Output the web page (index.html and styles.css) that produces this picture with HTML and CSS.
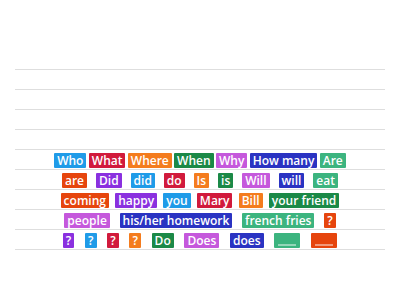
FILE: index.html
```html
<!DOCTYPE html>
<html>
<head>
<meta charset="utf-8">
<link rel="stylesheet" href="styles.css">
</head>
<body>
<div class="sheet">
  <div class="line"></div>
  <div class="line"></div>
  <div class="line"></div>
  <div class="line"></div>
  <div class="line">
    <div class="tiles wide">
      <span class="tile c-blue">Who</span>
      <span class="tile c-crimson">What</span>
      <span class="tile c-orange">Where</span>
      <span class="tile c-green">When</span>
      <span class="tile c-orchid">Why</span>
      <span class="tile c-navy">How many</span>
      <span class="tile c-teal">Are</span>
    </div>
  </div>
  <div class="line">
    <div class="tiles">
      <span class="tile c-red">are</span>
      <span class="tile c-violet">Did</span>
      <span class="tile c-blue">did</span>
      <span class="tile c-crimson">do</span>
      <span class="tile c-orange">Is</span>
      <span class="tile c-green">is</span>
      <span class="tile c-orchid">Will</span>
      <span class="tile c-navy">will</span>
      <span class="tile c-teal">eat</span>
    </div>
  </div>
  <div class="line">
    <div class="tiles">
      <span class="tile c-red">coming</span>
      <span class="tile c-violet">happy</span>
      <span class="tile c-blue">you</span>
      <span class="tile c-crimson">Mary</span>
      <span class="tile c-orange">Bill</span>
      <span class="tile c-green">your friend</span>
    </div>
  </div>
  <div class="line">
    <div class="tiles narrow">
      <span class="tile c-orchid">people</span>
      <span class="tile c-navy">his/her homework</span>
      <span class="tile c-teal">french fries</span>
      <span class="tile c-red">?</span>
    </div>
  </div>
  <div class="line last">
    <div class="tiles">
      <span class="tile c-violet">?</span>
      <span class="tile c-blue">?</span>
      <span class="tile c-crimson">?</span>
      <span class="tile c-orange">?</span>
      <span class="tile c-green">Do</span>
      <span class="tile c-orchid">Does</span>
      <span class="tile c-navy">does</span>
      <span class="tile blank c-teal"><span class="gap"></span></span>
      <span class="tile blank c-red"><span class="gap"></span></span>
    </div>
  </div>
</div>
</body>
</html>
```
FILE: styles.css
```css
html, body {
  margin: 0;
  padding: 0;
  background: #ffffff;
}
body {
  font-family: "Open Sans", "Liberation Sans", sans-serif;
}
.sheet {
  margin: 69px 15px 0;
}
.line {
  height: 19px;
  border-top: 1px solid #dedede;
  display: flex;
  align-items: center;
  justify-content: center;
}
.line.last {
  border-bottom: 1px solid #dedede;
}
.tiles {
  width: 285px;
  display: flex;
  justify-content: space-around;
  align-items: center;
  margin-top: 1px;
}
.tiles.wide {
  width: 294px;
}
.tiles.narrow {
  width: 281px;
}
.tile {
  display: inline-block;
  color: #ffffff;
  font-size: 12px;
  font-weight: 600;
  line-height: 15px;
  height: 15px;
  padding: 0 3px;
  border-radius: 1px;
  white-space: nowrap;
}
.tile.blank {
  height: 15px;
  width: 20px;
  padding: 0 3px;
  display: flex;
  align-items: flex-end;
  justify-content: center;
  box-sizing: content-box;
}
.gap {
  display: block;
  width: 18px;
  height: 0;
  border-bottom: 2px solid rgba(255,255,255,0.45);
  margin-bottom: 2px;
}
.c-blue { background: #1f9be8; }
.c-crimson { background: #d11a3c; }
.c-orange { background: #f47c1e; }
.c-green { background: #1b8947; }
.c-orchid { background: #c558dc; }
.c-navy { background: #2a33c2; }
.c-teal { background: #3cb47f; }
.c-red { background: #e6450d; }
.c-violet { background: #8a30df; }
```
